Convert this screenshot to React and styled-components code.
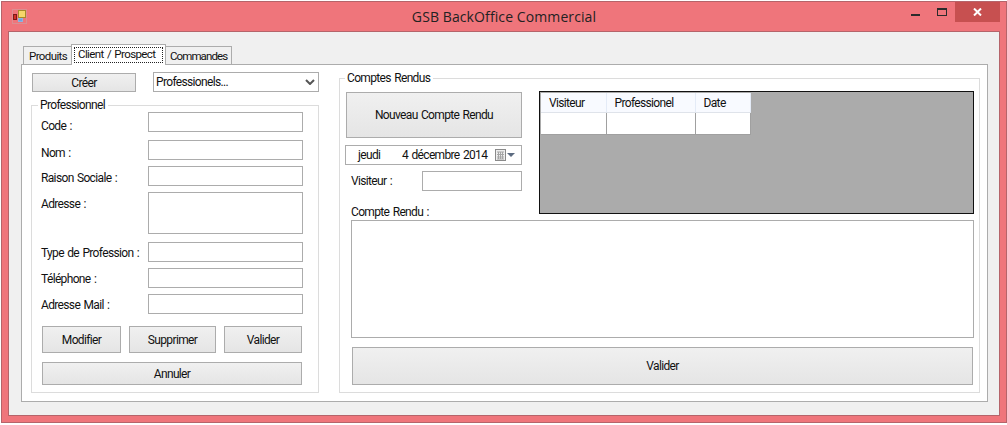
import React from 'react'
import styled, { createGlobalStyle } from 'styled-components';

const GlobalStyle = createGlobalStyle`
    * { box-sizing: border-box; }
    html, body { margin: 0; padding: 0; background: #fff; }
    body { font-family: Roboto, "Liberation Sans", sans-serif; font-size: 12px; letter-spacing: -0.65px; word-spacing: 1px; color: #111; }
`;

const fields = [
    { label: 'Code :', drop: 7 },
    { label: 'Nom :', drop: 6, gap: 8 },
    { label: 'Raison Sociale :', drop: 5 },
    { label: 'Adresse :', drop: 5, tall: true },
    { label: 'Type de Profession :', drop: 4, gap: 8 },
    { label: 'Téléphone :', drop: 4 },
    { label: 'Adresse Mail :', drop: 4 },
];

function AppIcon() {
    return (
        <svg width="15" height="15" viewBox="0 0 15 15">
            <rect x="0.5" y="0.5" width="14" height="14" fill="none" stroke="#c9a9a9" strokeDasharray="1 1" />
            <rect x="6.5" y="1.5" width="7" height="7" fill="#f5d76a" stroke="#a8892a" />
            <rect x="1.5" y="5.5" width="3" height="5" fill="#d22f27" stroke="#7c1a16" />
            <rect x="6.5" y="9.5" width="4" height="3" fill="#6fa3e0" stroke="#8fb3de" />
        </svg>
    );
}

function App() {
    return (
        <>
            <GlobalStyle />
            <Window>
                <TitleBar>
                    <IconSlot><AppIcon /></IconSlot>
                    <Title>GSB BackOffice Commercial</Title>
                    <Controls>
                        <MinGlyph />
                        <MaxGlyph />
                        <CloseButton>
                            <svg width="9" height="8" viewBox="0 0 9 8">
                                <path d="M1 0.5 L8 7.5 M8 0.5 L1 7.5" stroke="#fff" strokeWidth="2" />
                            </svg>
                        </CloseButton>
                    </Controls>
                </TitleBar>

                <Client>
                    <TabStrip>
                        <Tab $width={49}>Produits</Tab>
                        <Tab $width={95} $active><FocusRect>Client / Prospect</FocusRect></Tab>
                        <Tab $width={67} $tight>Commandes</Tab>
                    </TabStrip>

                    <TabPanel>
                        <LeftColumn>
                            <TopRow>
                                <CreateButton>Créer</CreateButton>
                                <SelectBox>
                                    <span>Professionels...</span>
                                    <svg width="10" height="6" viewBox="0 0 10 6">
                                        <path d="M1 1 L5 5 L9 1" fill="none" stroke="#555" strokeWidth="2" />
                                    </svg>
                                </SelectBox>
                            </TopRow>

                            <ProGroup>
                                <Legend $inset={6}>Professionnel</Legend>
                                <ProBody>
                                    {fields.map((f) => (
                                        <FieldRow key={f.label} $gap={f.gap}>
                                            <FieldLabel $drop={f.drop}>{f.label}</FieldLabel>
                                            {f.tall ? <AddressInput /> : <TextInput />}
                                        </FieldRow>
                                    ))}
                                    <ActionRow>
                                        <ActionButton $width={79}>Modifier</ActionButton>
                                        <ActionButton $width={87}>Supprimer</ActionButton>
                                        <ActionButton $width={78}>Valider</ActionButton>
                                    </ActionRow>
                                    <CancelButton>Annuler</CancelButton>
                                </ProBody>
                            </ProGroup>
                        </LeftColumn>

                        <ReportGroup>
                            <Legend $inset={5}>Comptes Rendus</Legend>
                            <ReportTop>
                                <ReportForm>
                                    <NewReportButton>Nouveau Compte Rendu</NewReportButton>
                                    <DatePicker>
                                        <DayName>jeudi</DayName>
                                        <DateText>4 décembre 2014</DateText>
                                        <svg width="20" height="13" viewBox="0 0 20 13">
                                            <rect x="0.5" y="0.5" width="10" height="11" fill="#eee" stroke="#8a8a8a" />
                                            <path d="M2 3h7M2 5.5h7M2 8h7M2 10h7M3.5 3v7M5.5 3v7M7.5 3v7" stroke="#a5a5a5" strokeWidth="1" />
                                            <path d="M12 4 H20 L16 8 Z" fill="#5c6b80" />
                                        </svg>
                                    </DatePicker>
                                    <VisitorRow>
                                        <VisitorLabel>Visiteur :</VisitorLabel>
                                        <VisitorInput />
                                    </VisitorRow>
                                    <ReportLabel>Compte Rendu :</ReportLabel>
                                </ReportForm>

                                <GridView>
                                    <GridTable>
                                        <colgroup>
                                            <col width="65" />
                                            <col width="89" />
                                            <col width="55" />
                                        </colgroup>
                                        <thead>
                                            <tr>
                                                <HeadCell>Visiteur</HeadCell>
                                                <HeadCell>Professionel</HeadCell>
                                                <HeadCell>Date</HeadCell>
                                            </tr>
                                        </thead>
                                        <tbody>
                                            <tr>
                                                <BodyCell />
                                                <BodyCell />
                                                <BodyCell />
                                            </tr>
                                        </tbody>
                                    </GridTable>
                                </GridView>
                            </ReportTop>
                            <ReportText />
                            <SubmitButton>Valider</SubmitButton>
                        </ReportGroup>
                    </TabPanel>
                </Client>
            </Window>
        </>
    )
}

const Window = styled.div`
    width: 1006px;
    height: 422px;
    margin: 1px 0 0 1px;
    background: #ef757b;
    border: 1px solid #b5646a;
    padding: 0 6px 6px 6px;
    display: flex;
    flex-direction: column;
`;

const TitleBar = styled.div`
    height: 29px;
    flex: none;
    position: relative;
    display: flex;
    align-items: flex-start;
`;

const IconSlot = styled.div`
    margin: 7px 0 0 4px;
    line-height: 0;
`;

const Title = styled.div`
    position: absolute;
    left: 0;
    right: 0;
    top: 5px;
    text-align: center;
    font-family: "Open Sans", sans-serif;
    font-size: 14px;
    letter-spacing: 0.1px;
    word-spacing: 0;
    line-height: 20px;
    color: #222;
`;

const Controls = styled.div`
    margin-left: auto;
    display: flex;
    align-items: flex-start;
`;

const MinGlyph = styled.div`
    width: 9px;
    height: 2px;
    margin-top: 12px;
    background: #2b2b2b;
`;

const MaxGlyph = styled.div`
    width: 10px;
    height: 8px;
    margin: 6px 0 0 17px;
    border: 1px solid #2b2b2b;
    border-top-width: 2px;
`;

const CloseButton = styled.div`
    width: 45px;
    height: 20px;
    margin-left: 8px;
    background: #c75050;
    display: flex;
    align-items: center;
    justify-content: center;
`;

const Client = styled.div`
    flex: 1;
    background: #f0f0f0;
    border: 1px solid #b5646a;
    padding: 12px 11px 13px 12px;
    display: flex;
    flex-direction: column;
`;

const TabStrip = styled.div`
    height: 21px;
    flex: none;
    display: flex;
    align-items: flex-end;
    padding-left: 3px;
    position: relative;
    z-index: 1;
`;

const Tab = styled.div`
    height: ${(p) => (p.$active ? '21px' : '19px')};
    width: ${(p) => p.$width}px;
    padding: ${(p) => (p.$active ? '2px 2px 1px 2px' : p.$tight ? '2px 0 0 4px' : '2px 0 0 5px')};
    background: ${(p) => (p.$active ? '#fff' : '#f0f0f0')};
    border: 1px solid #acacac;
    border-bottom: ${(p) => (p.$active ? 'none' : '1px solid #acacac')};
    margin-left: -1px;
    font-size: 11.5px;
    letter-spacing: ${(p) => (p.$tight ? '-0.9px' : '-0.6px')};
    line-height: 15px;
    white-space: nowrap;
    color: #111;
`;

const FocusRect = styled.div`
    border: 1px dotted #222;
    height: 16px;
    line-height: 13px;
    padding-left: 3px;
`;

const TabPanel = styled.div`
    margin-top: -1px;
    height: 338px;
    flex: none;
    background: #fff;
    border: 1px solid #acacac;
    padding: 6px 0 8px 9px;
    display: flex;
    gap: 20px;
`;

const LeftColumn = styled.div`
    width: 288px;
    flex: none;
    padding-top: 1px;
    display: flex;
    flex-direction: column;
`;

const TopRow = styled.div`
    display: flex;
    align-items: flex-start;
    justify-content: space-between;
    height: 26px;
`;

const RaisedButton = styled.button`
    display: block;
    font-family: Roboto, "Liberation Sans", sans-serif;
    font-size: 12px;
    letter-spacing: -0.65px;
    word-spacing: 1px;
    color: #111;
    padding: 0;
    background: linear-gradient(#f0f0f0, #e5e5e5);
    border: 1px solid #acacac;
    border-radius: 0;
`;

const CreateButton = styled(RaisedButton)`
    width: 104px;
    height: 19px;
    margin: 1px 0 0 1px;
`;

const SelectBox = styled.div`
    position: relative;
    width: 166px;
    height: 20px;
    border: 1px solid #acacac;
    background: #fff;
    display: flex;
    align-items: center;
    justify-content: space-between;
    padding: 0 3px 0 2px;
`;

const GroupBox = styled.fieldset`
    margin: 0;
    min-width: 0;
    border: 1px solid #dcdcdc;
    padding: 0;
`;

const Legend = styled.legend`
    margin-left: ${(p) => p.$inset}px;
    padding: 0 3px 0 2px;
    line-height: 14px;
    height: 14px;
    color: #111;
`;

const ProGroup = styled(GroupBox)`
    flex: 1;
`;

const ProBody = styled.div`
    padding-left: 9px;
`;

const FieldRow = styled.div`
    display: flex;
    margin-top: ${(p) => p.$gap || 6}px;
    &:first-of-type {
        margin-top: 0;
    }
`;

/* label sits lower than its input on some rows, the fixed height keeps the row at 20px */
const FieldLabel = styled.div`
    width: 107px;
    height: 20px;
    flex: none;
    padding-top: ${(p) => p.$drop}px;
    line-height: 14px;
    white-space: nowrap;
`;

const TextInput = styled.input`
    display: block;
    width: 155px;
    height: 20px;
    border: 1px solid #acacac;
    background: #fff;
    padding: 0 2px;
    border-radius: 0;
`;

const AddressInput = styled.textarea`
    display: block;
    width: 155px;
    height: 42px;
    border: 1px solid #acacac;
    background: #fff;
    padding: 0;
    border-radius: 0;
    resize: none;
`;

const ActionRow = styled.div`
    display: flex;
    gap: 8px;
    margin: 12px 0 9px 1px;
`;

const ActionButton = styled(RaisedButton)`
    width: ${(p) => p.$width}px;
    height: 27px;
`;

const CancelButton = styled(RaisedButton)`
    width: 260px;
    height: 23px;
    margin-left: 1px;
`;

const ReportGroup = styled(GroupBox)`
    width: 641px;
    flex: none;
    padding: 0;
`;

const ReportTop = styled.div`
    display: flex;
    align-items: flex-start;
    padding: 6px 0 0 5px;
`;

const ReportForm = styled.div`
    width: 177px;
    flex: none;
    padding-top: 1px;
`;

const NewReportButton = styled(RaisedButton)`
    width: 176px;
    height: 46px;
    margin-left: 1px;
`;

const DatePicker = styled.div`
    margin-top: 7px;
    height: 20px;
    border: 1px solid #acacac;
    background: #fff;
    display: flex;
    align-items: center;
    padding: 0 5px 0 12px;
`;

const DayName = styled.span`
    width: 44px;
    flex: none;
`;

const DateText = styled.span`
    width: 93px;
    flex: none;
    white-space: nowrap;
`;

const VisitorRow = styled.div`
    display: flex;
    margin-top: 6px;
`;

const VisitorLabel = styled.div`
    width: 77px;
    flex: none;
    padding: 3px 0 0 6px;
    line-height: 14px;
`;

const VisitorInput = styled(TextInput)`
    width: 100px;
`;

const ReportLabel = styled.div`
    margin: 14px 0 0 6px;
    line-height: 14px;
    white-space: nowrap;
`;

const GridView = styled.div`
    width: 435px;
    height: 123px;
    margin-left: 17px;
    background: #ababab;
    border: 1px solid #111;
    padding: 1px;
`;

const GridTable = styled.table`
    border-collapse: collapse;
    table-layout: fixed;
    width: 209px;
    background: #fff;
`;

const HeadCell = styled.th`
    height: 19px;
    padding: 1px 0 0 8px;
    font-weight: normal;
    text-align: left;
    background: #f8faff;
    border-right: 1px solid #e4ebf7;
    border-bottom: 1px solid #dfe3ea;
`;

const BodyCell = styled.td`
    height: 22px;
    padding: 0;
    background: #fff;
    border-right: 1px solid #a0a0a0;
    border-bottom: 1px solid #a0a0a0;
`;

const ReportText = styled.textarea`
    display: block;
    width: 623px;
    height: 118px;
    margin: 1px 0 0 11px;
    border: 1px solid #acacac;
    background: #fff;
    resize: none;
    border-radius: 0;
`;

const SubmitButton = styled(RaisedButton)`
    width: 621px;
    height: 38px;
    margin: 9px 0 0 12px;
`;

export default App;
